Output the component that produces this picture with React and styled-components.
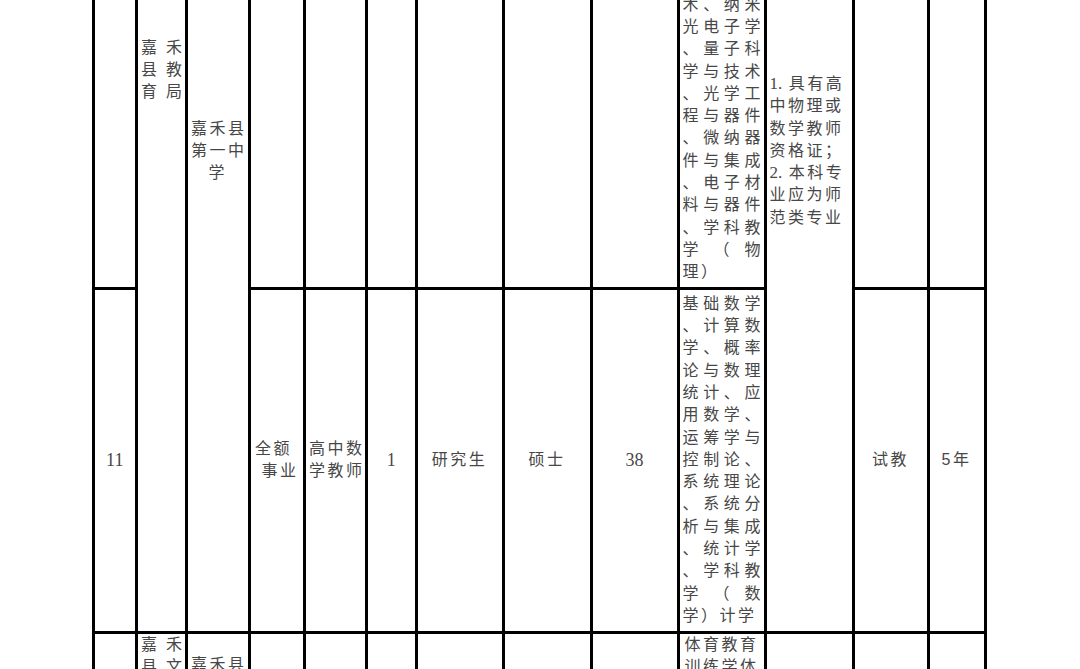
import React from "react";
import styled, { createGlobalStyle } from "styled-components";

const GlobalStyle = createGlobalStyle`
  html, body {
    margin: 0;
    padding: 0;
    background: #ffffff;
  }
`;

const widths = [43.5, 50, 62.5, 55.5, 62, 49.5, 87, 88, 87, 87, 88, 75, 57];

const physicsMajors = [
  "术、纳米",
  "光电子学",
  "、量子科",
  "学与技术",
  "、光学工",
  "程与器件",
  "、微纳器",
  "件与集成",
  "、电子材",
  "料与器件",
  "、学科教",
  "学（物",
];

const mathMajors = [
  "基础数学",
  "、计算数",
  "学、概率",
  "论与数理",
  "统计、应",
  "用数学、",
  "运筹学与",
  "控制论、",
  "系统理论",
  "、系统分",
  "析与集成",
  "、统计学",
  "、学科教",
  "学（数",
];

const App = () => {
  return (
    <>
      <GlobalStyle />
      <Page>
        <Sheet>
          <colgroup>
            {widths.map((w, i) => (
              <Col key={i} $w={w} />
            ))}
          </colgroup>
          <tbody>
            <Row $h={618}>
              <Cell />
              <Cell rowSpan={2} $valign="top" $top={365}>
                <JLine>嘉禾</JLine>
                <JLine>县教</JLine>
                <JLine>育局</JLine>
              </Cell>
              <Cell rowSpan={2}>
                <Line>嘉禾县</Line>
                <Line>第一中</Line>
                <Line>学</Line>
              </Cell>
              <Cell />
              <Cell />
              <Cell />
              <Cell />
              <Cell />
              <Cell />
              <Cell $valign="bottom" $bottom={3}>
                {physicsMajors.map((t) => (
                  <JLine key={t}>{t}</JLine>
                ))}
                <LeftLine>理）</LeftLine>
              </Cell>
              <Cell rowSpan={2} $align="left">
                <Line>
                  <Num>1.</Num> 具有高
                </Line>
                <Line>中物理或</Line>
                <Line>数学教师</Line>
                <Line>资格证；</Line>
                <Line>
                  <Num>2.</Num> 本科专
                </Line>
                <Line>业应为师</Line>
                <Line>范类专业</Line>
              </Cell>
              <Cell />
              <Cell />
            </Row>
            <Row $h={344}>
              <Cell $num>11</Cell>
              <Cell $top={0}>
                <Line>全额&nbsp;</Line>
                <Line>&nbsp;事业</Line>
              </Cell>
              <Cell>
                <Line>高中数</Line>
                <Line>学教师</Line>
              </Cell>
              <Cell $num>1</Cell>
              <Cell>研究生</Cell>
              <Cell>硕士</Cell>
              <Cell $num>38</Cell>
              <Cell>
                {mathMajors.map((t) => (
                  <JLine key={t}>{t}</JLine>
                ))}
                <LeftLine>学）计学</LeftLine>
              </Cell>
              <Cell $sans>试教</Cell>
              <Cell $sans>5年</Cell>
            </Row>
            <Row $h={200}>
              <Cell />
              <Cell $valign="top" $top={0}>
                <JLine>嘉禾</JLine>
                <JLine>县文</JLine>
              </Cell>
              <Cell $valign="top" $top={20}>
                <Line>嘉禾县</Line>
              </Cell>
              <Cell />
              <Cell />
              <Cell />
              <Cell />
              <Cell />
              <Cell />
              <Cell $valign="top" $top={0}>
                <Line>体育教育</Line>
                <Line>训练学体</Line>
              </Cell>
              <Cell />
              <Cell />
              <Cell />
            </Row>
          </tbody>
        </Sheet>
      </Page>
    </>
  );
};

export default App;

const Page = styled.div`
  height: 669px;
  overflow: hidden;
  padding-left: 91.5px;
  background: #ffffff;
`;

const Sheet = styled.table`
  border-collapse: collapse;
  table-layout: fixed;
  width: 895px;
  margin-top: -331.5px;
  font-family: "Liberation Serif", "Noto Sans CJK SC", serif;
`;

const Col = styled.col`
  width: ${(p) => p.$w}px;
`;

const Row = styled.tr`
  height: ${(p) => p.$h}px;
`;

const Cell = styled.td`
  border: 3px solid #000;
  padding: ${(p) => (p.$top != null ? `${p.$top}px` : "0")} 3px
    ${(p) => (p.$bottom != null ? `${p.$bottom}px` : "0")};
  vertical-align: ${(p) => p.$valign || "middle"};
  text-align: ${(p) => p.$align || "center"};
  font-family: ${(p) =>
    p.$sans
      ? `"Liberation Sans", "Noto Sans CJK SC", sans-serif`
      : `"Liberation Serif", "Noto Sans CJK SC", serif`};
  font-size: ${(p) => (p.$num ? "18px" : "16px")};
  line-height: 22.3px;
  letter-spacing: ${(p) => (p.$num ? "0" : "2.5px")};
  color: #474747;
  white-space: nowrap;
  overflow: hidden;
`;

const Num = styled.span`
  font-size: 17px;
  letter-spacing: 0;
`;

const Line = styled.div`
  white-space: nowrap;
`;

const JLine = styled.div`
  text-align: justify;
  text-align-last: justify;
  letter-spacing: 0;
  white-space: normal;
`;

const LeftLine = styled.div`
  text-align: left;
  letter-spacing: 2.5px;
`;
